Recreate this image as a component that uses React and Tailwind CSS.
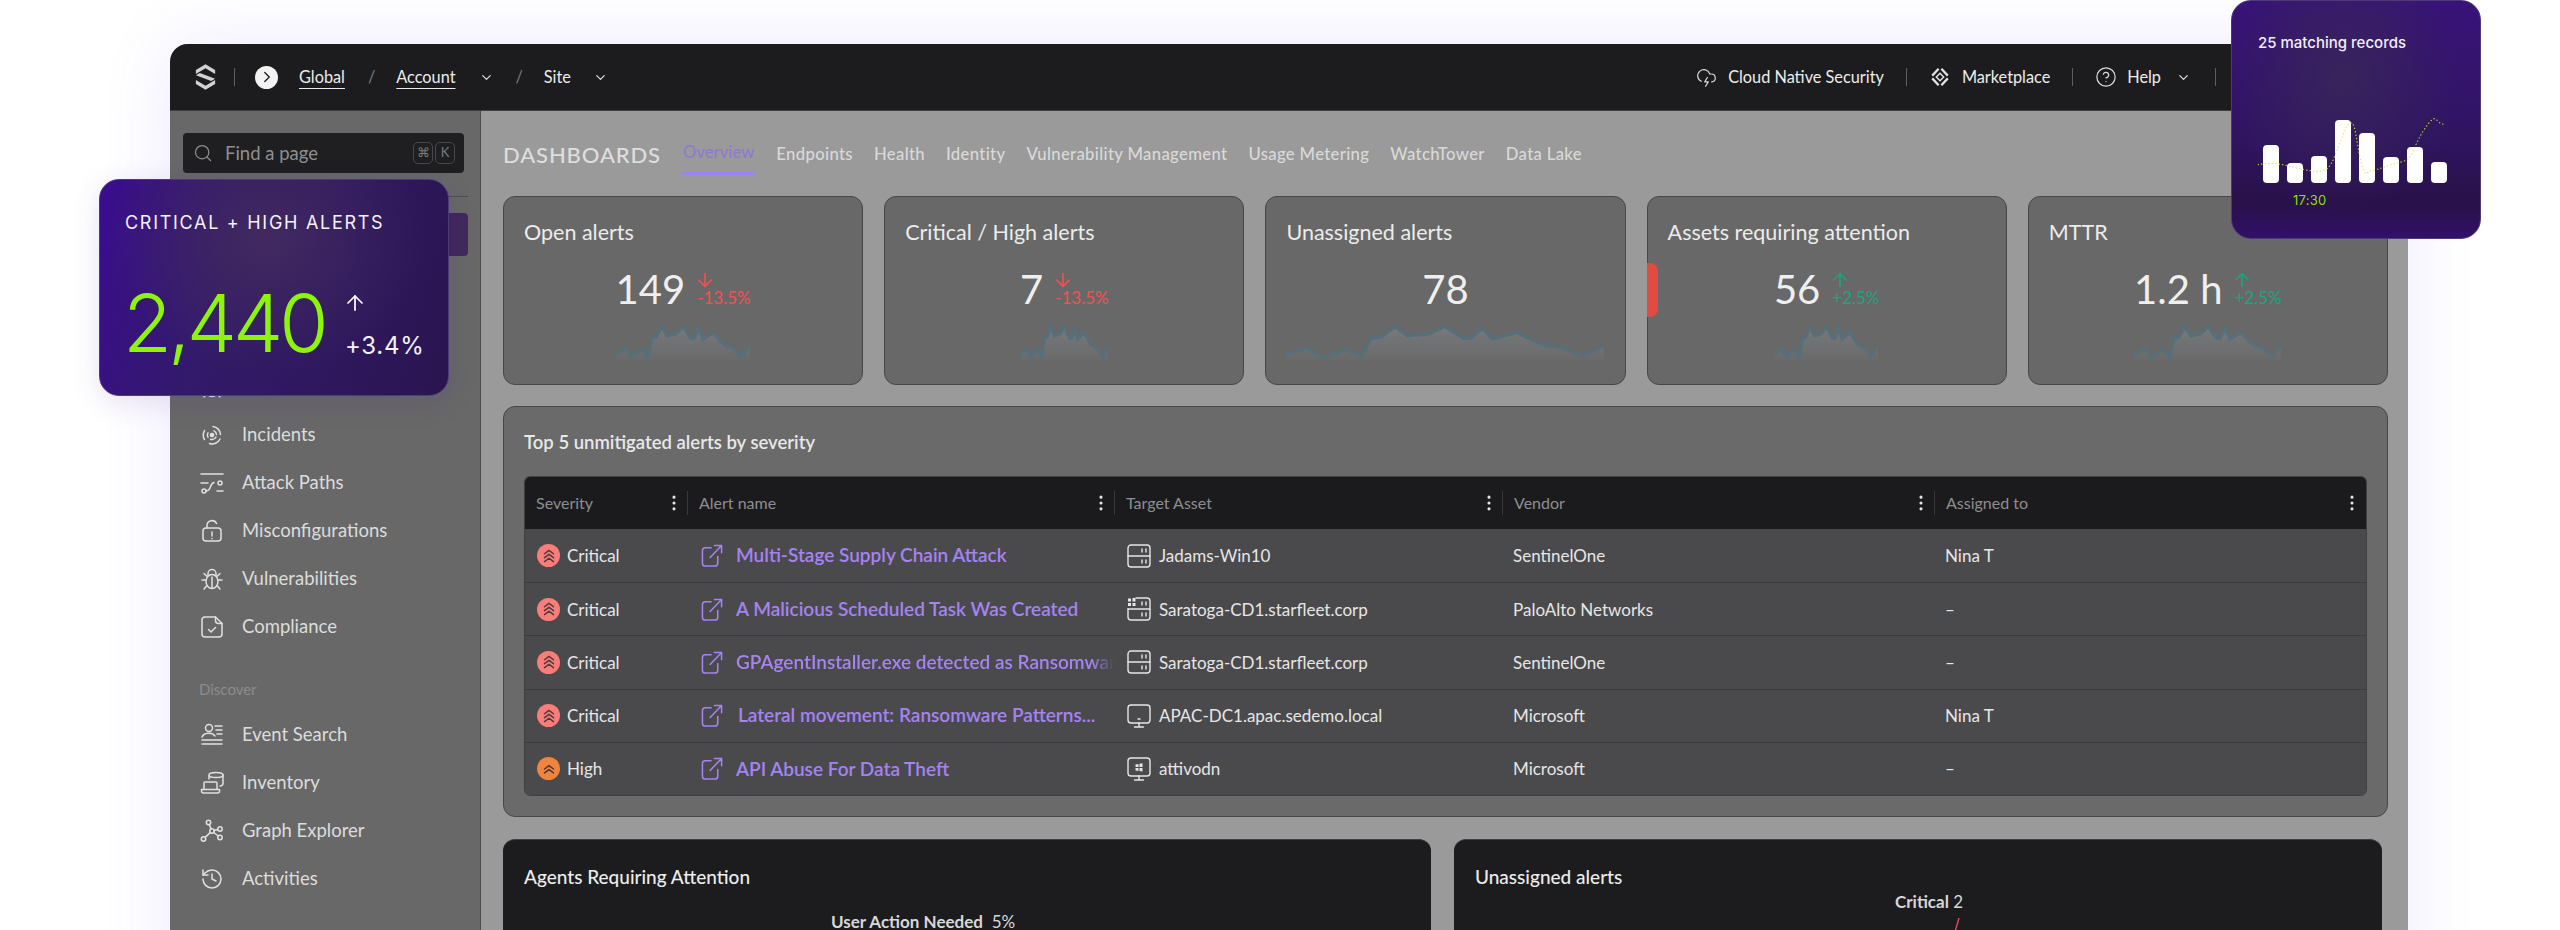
import React from "react";
import {
  ArrowDown,
  ArrowUp,
  ChevronDown,
  ChevronRight,
  CircleHelp,
  CloudLightning,
  EllipsisVertical,
  History,
  Search,
} from "lucide-react";

const Ico = ({ children, className = "w-6 h-6" }) => (
  <svg
    viewBox="0 0 24 24"
    fill="none"
    stroke="currentColor"
    strokeWidth="1.5"
    strokeLinecap="round"
    strokeLinejoin="round"
    className={className}
  >
    {children}
  </svg>
);

const sideIcons = {
  incidents: (
    <Ico>
      <circle cx="12" cy="12" r="1.6" fill="currentColor" />
      <path d="M4.5 7.5a9 9 0 0 0 0 9M8 9.8a4 4 0 0 0 0 4.4M13 3.5a8.5 8.5 0 0 1 7.5 8M14 7.8a4.5 4.5 0 0 1 2.5 3.7M9.5 20.5a8.5 8.5 0 0 0 10.5-4.5M10.5 16.2a4.5 4.5 0 0 0 5.5-2.2" />
    </Ico>
  ),
  paths: (
    <Ico>
      <path d="M1 3h22M1 12h7M17 20h6" />
      <circle cx="4" cy="20" r="2" />
      <circle cx="20" cy="12" r="2" />
      <path d="M6 20c6-.5 3-7 8-8.5" />
    </Ico>
  ),
  misconfig: (
    <Ico>
      <rect x="3" y="9" width="18" height="13" rx="3" />
      <path d="M7 9V6.5a5 5 0 0 1 9.5-2M12 13v4M12 19.6v.1" />
    </Ico>
  ),
  bug: (
    <Ico>
      <ellipse cx="12" cy="14.5" rx="6" ry="7" />
      <path d="M8 8.5V6.5a4 4 0 0 1 8 0v2M12 10v11M6 13H2M22 13h-4M6.5 9 4 6.5M17.5 9 20 6.5M6.5 19 4 22M17.5 19l2.5 3" />
    </Ico>
  ),
  compliance: (
    <Ico>
      <path d="M5 2h10.5L22 8.5V19a3 3 0 0 1-3 3H5a3 3 0 0 1-3-3V5a3 3 0 0 1 3-3z" />
      <path d="M15.5 2v3.5a3 3 0 0 0 3 3H22M8.5 14.5l2.5 2.5 4.5-4.5" />
    </Ico>
  ),
  events: (
    <Ico>
      <circle cx="9" cy="5" r="3.5" />
      <path d="M2 14a7 5 0 0 1 13-1M15 3h7M16 7h6M17 11h5M2 17h20M2 21h20" />
    </Ico>
  ),
  inventory: (
    <Ico>
      <path d="M4 18v-6a1 1 0 0 1 1-1h11a1 1 0 0 1 1 1v6M1.5 18.5h18V20a2 2 0 0 1-2 2h-14a2 2 0 0 1-2-2z" />
      <ellipse cx="16" cy="4" rx="7" ry="2.5" />
      <path d="M9 5v3M23 4v8a3 3 0 0 1-3 3" />
    </Ico>
  ),
  graph: (
    <Ico>
      <circle cx="8.5" cy="3.5" r="2.2" />
      <circle cx="20" cy="10" r="2.2" />
      <circle cx="20" cy="18.5" r="2.2" />
      <circle cx="3.5" cy="20" r="2.2" />
      <circle cx="12" cy="12" r="2.2" />
      <path d="m9.3 5.6 1.8 4.4M14.2 11.5l3.6-1M13.7 13.5l4.6 3.5M10.3 13.6l-5.2 4.8" />
    </Ico>
  ),
  history: <History className="w-6 h-6" strokeWidth={1.5} />,
};

const navTop = [
  ["Incidents", "incidents"],
  ["Attack Paths", "paths"],
  ["Misconfigurations", "misconfig"],
  ["Vulnerabilities", "bug"],
  ["Compliance", "compliance"],
];

const navBottom = [
  ["Event Search", "events"],
  ["Inventory", "inventory"],
  ["Graph Explorer", "graph"],
  ["Activities", "history"],
];

const tabs = [
  "Endpoints",
  "Health",
  "Identity",
  "Vulnerability Management",
  "Usage Metering",
  "WatchTower",
  "Data Lake",
];

const stats = [
  { title: "Open alerts", value: "149", delta: "-13.5%", dir: "down", spark: "w-[134px]" },
  { title: "Critical / High alerts", value: "7", delta: "-13.5%", dir: "down", spark: "w-[87px]" },
  { title: "Unassigned alerts", value: "78", spark: "w-[318px]" },
  { title: "Assets requiring attention", value: "56", delta: "+2.5%", dir: "up", spark: "w-[103px]", flag: true },
  { title: "MTTR", value: "1.2 h", delta: "+2.5%", dir: "up", spark: "w-[146px]" },
];

const rows = [
  { sev: "Critical", name: "Multi-Stage Supply Chain Attack", asset: "server", host: "Jadams-Win10", vendor: "SentinelOne", who: "Nina T" },
  { sev: "Critical", name: "A Malicious Scheduled Task Was Created", asset: "serverWin", host: "Saratoga-CD1.starfleet.corp", vendor: "PaloAlto Networks", who: "–" },
  { sev: "Critical", name: "GPAgentInstaller.exe detected as Ransomware", asset: "server", host: "Saratoga-CD1.starfleet.corp", vendor: "SentinelOne", who: "–", clipped: true },
  { sev: "Critical", name: "Lateral movement: Ransomware Patterns...", asset: "monitor", host: "APAC-DC1.apac.sedemo.local", vendor: "Microsoft", who: "Nina T", nudge: true },
  { sev: "High", name: "API Abuse For Data Theft", asset: "monitorWin", host: "attivodn", vendor: "Microsoft", who: "–" },
];

const Spark = ({ className }) => (
  <svg viewBox="45 195 400 105" preserveAspectRatio="none" className={`${className} h-[35px]`}>
    <defs>
      <linearGradient id="sparkFill" x1="0" y1="0" x2="0" y2="1">
        <stop offset="0" stopColor="#77797b" />
        <stop offset="1" stopColor="#6a6a6a" />
      </linearGradient>
    </defs>
    <path
      d="M45 283 72 265 90 295 120 268 140 290 152 235 165 232 182 200 198 228 225 222 245 200 268 235 278 235 292 205 305 238 335 218 368 255 395 265 418 290 445 258V300H45Z"
      fill="url(#sparkFill)"
    />
    <path
      d="M45 283 72 265 90 295 120 268 140 290 152 235 165 232 182 200 198 228 225 222 245 200 268 235 278 235 292 205 305 238 335 218 368 255 395 265 418 290 445 258"
      fill="none"
      stroke="#56707b"
      strokeWidth="3"
      vectorEffect="non-scaling-stroke"
    />
  </svg>
);

const StatCard = ({ title, value, delta, dir, spark, flag }) => (
  <div className="relative h-[189px] rounded-[12px] border border-[#474747] bg-[#686868] pt-[22px] flex flex-col">
    {flag && <div className="absolute -left-px top-[66px] h-[54px] w-[11px] rounded-r-[8px] bg-[#e04b42]" />}
    <p className="pl-5 text-[21.5px] leading-[26px] text-[#ececec]">{title}</p>
    <div className="mt-[19px] flex items-start justify-center gap-[12px] h-[50px]">
      <span className="text-[40px] leading-[50px] text-[#efefef]">{value}</span>
      {delta && (
        <span className={`flex flex-col items-start pt-[5px] text-[17px] leading-[17px] ${dir === "down" ? "text-[#f55050]" : "text-[#1fa37e]"}`}>
          {dir === "down" ? <ArrowDown className="w-[22px] h-[22px] -ml-[3px] -mb-[2px]" strokeWidth={1.75} /> : <ArrowUp className="w-[22px] h-[22px] -ml-[3px] -mb-[2px]" strokeWidth={1.75} />}
          {delta}
        </span>
      )}
    </div>
    <div className="mt-[11px] flex justify-center">
      <Spark className={spark} />
    </div>
  </div>
);

const SevIcon = ({ sev }) => (
  <span className={`w-[23px] h-[23px] rounded-full flex items-center justify-center shrink-0 ${sev === "High" ? "bg-[#f0843c]" : "bg-[#fb7d7a]"}`}>
    <svg viewBox="0 0 16 16" fill="none" stroke="#4a3a3c" strokeWidth="1.3" strokeLinecap="round" strokeLinejoin="round" className="w-[18px] h-[18px]">
      {sev === "High" ? (
        <path d="M4 8l4-3 4 3M4 11.5l4-3 4 3" />
      ) : (
        <path d="M4 6l4-3 4 3M4 9.5l4-3 4 3M4 13l4-3 4 3" />
      )}
    </svg>
  </span>
);

const LinkIcon = () => (
  <svg viewBox="0 0 22 24" fill="none" stroke="#a583f0" strokeWidth="1.6" strokeLinecap="round" strokeLinejoin="round" className="w-[22px] h-[23px] shrink-0">
    <path d="M10 4H4a3 3 0 0 0-3 3v13a3 3 0 0 0 3 3h10a3 3 0 0 0 3-3v-7" />
    <path d="M9 14 21 1.5M13.5 1.5H21V9" />
  </svg>
);

const AssetIcon = ({ kind }) => (
  <svg viewBox="0 0 24 24" fill="none" stroke="#e6e6e6" strokeWidth="1.4" strokeLinecap="round" strokeLinejoin="round" className="w-6 h-6 shrink-0">
    {(kind === "server" || kind === "serverWin") && (
      <>
        <path d={kind === "server" ? "M4 1h16a3 3 0 0 1 3 3v16a3 3 0 0 1-3 3H4a3 3 0 0 1-3-3V4a3 3 0 0 1 3-3z" : "M9 1h11a3 3 0 0 1 3 3v16a3 3 0 0 1-3 3H4a3 3 0 0 1-3-3v-8"} />
        <path d="M1 12h22M15 5v3M19 5v3M15 16v3M19 16v3" />
      </>
    )}
    {kind === "serverWin" && (
      <path d="M1 1.5h3v3H1zM5.5 1h3v3.5h-3zM1 6h3v3H1zM5.5 6h3v3h-3z" fill="#e6e6e6" stroke="none" />
    )}
    {(kind === "monitor" || kind === "monitorWin") && (
      <>
        <rect x="1" y="1" width="22" height="18" rx="3" />
        <path d="M12 19v4M7.5 23h9" />
      </>
    )}
    {kind === "monitor" && <path d="M11 15h2" />}
    {kind === "monitorWin" && (
      <path d="M8.5 7.5l3-.6v3h-3zM12.5 6.8l3-.6v3.7h-3zM8.5 10.9h3v3l-3-.5zM12.5 10.9h3v3.7l-3-.5z" fill="#e6e6e6" stroke="none" />
    )}
  </svg>
);

const HeadCell = ({ label, first, last }) => (
  <div className={`relative flex items-center h-full text-[16px] text-[#8e8e90] ${first ? "pl-[11px]" : "pl-[12px]"}`}>
    {!first && <span className="absolute left-0 top-[14px] h-[24px] w-px bg-[#38383a]" />}
    {label}
    <EllipsisVertical className={`absolute top-[16px] w-[20px] h-[20px] text-[#e4e4e4] ${last ? "right-[4px]" : "right-[3px]"}`} strokeWidth={1.75} />
  </div>
);

const NavItem = ({ label, icon }) => (
  <div className="h-[48px] flex items-center gap-[18px] pl-[17px] text-[18.5px] text-[#dcdcdc]">
    <span className="text-[#e0e0e0]">{sideIcons[icon]}</span>
    {label}
  </div>
);

const TopSep = () => <span className="block w-px h-[18px] bg-[#5e5e60]" />;

const bars = [38, 20, 27, 63, 50, 26, 36, 21];

export default function App() {
  return (
    <div className="relative w-[2560px] h-[930px] overflow-hidden bg-white font-['Lato',sans-serif]">
      <div className="absolute left-[170px] top-[44px] w-[2238px] h-[1000px] rounded-t-[18px] shadow-[0_0_70px_rgba(110,70,255,0.12)]" />
      <div className="relative ml-[170px] pt-[44px] w-[2238px] h-[930px]">
        <div className="h-full rounded-t-[18px] overflow-hidden flex flex-col bg-[#9a9a9a]">
          <header className="h-[67px] shrink-0 bg-[#1c1c1e] border-b border-[#3e3e40] flex items-center text-[16.3px] text-[#ececec]">
            <svg viewBox="0 0 24 29" fill="#d2d2d2" className="ml-[25px] w-[21px] h-[26px]">
              <path d="M12 0l11 6.5V11L12 4.5 1 11V6.5z" />
              <path d="M1 12.5l4.5-2.7L23 16.5l-4.5 2.7z" />
              <path d="M12 29 1 22.5V18l11 6.5L23 18v4.5z" />
            </svg>
            <span className="ml-[18px]"><TopSep /></span>
            <span className="ml-[20px] w-[23px] h-[23px] rounded-full bg-[#f2f2f2] flex items-center justify-center">
              <ChevronRight className="w-[18px] h-[18px] text-[#1c1c1e]" strokeWidth={1.75} />
            </span>
            <span className="ml-[21px] underline underline-offset-[5px]">Global</span>
            <span className="ml-[23px] text-[#7b7b7d]">/</span>
            <span className="ml-[21px] underline underline-offset-[5px]">Account</span>
            <ChevronDown className="ml-[23px] w-[15px] h-[15px] text-[#dcdcdc]" />
            <span className="ml-[22px] text-[#7b7b7d]">/</span>
            <span className="ml-[21px]">Site</span>
            <ChevronDown className="ml-[22px] w-[15px] h-[15px] text-[#dcdcdc]" />
            <div className="ml-auto mr-[192px] flex items-center">
              <CloudLightning className="w-[21px] h-[21px] text-[#d8d8d8]" strokeWidth={1.4} />
              <span className="ml-[11px]">Cloud Native Security</span>
              <span className="ml-[22px] mr-[22px]"><TopSep /></span>
              <svg viewBox="0 0 24 24" fill="none" stroke="#e4e4e4" strokeWidth="2.4" className="w-[22px] h-[22px]">
                <path d="M10.5 3 3.5 10.5M13.5 3l7 7.5M3.5 13.5l7 7.5M20.5 13.5l-7 7.5" />
                <path d="M12 8l4 4-4 4-4-4z" strokeWidth="1.6" />
              </svg>
              <span className="ml-[11px]">Marketplace</span>
              <span className="ml-[22px] mr-[22px]"><TopSep /></span>
              <CircleHelp className="w-[22px] h-[22px] text-[#dcdcdc]" strokeWidth={1.3} />
              <span className="ml-[10px]">Help</span>
              <ChevronDown className="ml-[15px] w-[15px] h-[15px] text-[#dcdcdc]" />
              <span className="ml-[24px]"><TopSep /></span>
            </div>
          </header>

          <div className="flex flex-1 min-h-0">
            <aside className="w-[311px] shrink-0 bg-[#686868] border-r border-[#4c4c4c] pt-[22px] px-[13px]">
              <div className="h-[40px] w-[281px] rounded-[4px] bg-[#1f1f21] flex items-center pl-[10px] pr-[9px] text-[18.5px] text-[#8f8f91]">
                <Search className="w-[20px] h-[20px] text-[#8f8f91]" strokeWidth={1.5} />
                <span className="ml-[12px] pt-[2px]">Find a page</span>
                <span className="ml-auto flex gap-[2px] text-[13px] text-[#79797b]">
                  <span className="w-[20px] h-[22px] rounded-[5px] border border-[#48484a] flex items-center justify-center">⌘</span>
                  <span className="w-[20px] h-[22px] rounded-[5px] border border-[#48484a] flex items-center justify-center">K</span>
                </span>
              </div>
              <div className="mt-[23px] h-px w-[285px] bg-[#4e4e4e]" />
              <div className="mt-[16px] h-[43px] w-[285px] rounded-[4px] bg-[#40295c]" />
              <div className="h-[106.5px]" />
              <div className="h-[48px] flex items-center pl-[17px] text-[#dcdcdc]">{sideIcons.bug}</div>
              {navTop.map(([label, icon]) => (
                <NavItem key={label} label={label} icon={icon} />
              ))}
              <p className="mt-[28px] mb-[12px] pl-[16px] text-[15px] leading-[20px] text-[#8c8c8c]">Discover</p>
              {navBottom.map(([label, icon]) => (
                <NavItem key={label} label={label} icon={icon} />
              ))}
            </aside>

            <main className="flex-1 min-w-0 pl-[22px] pr-[20px]">
              <div className="h-[63px] flex items-end">
                <div className="flex items-center h-[41px] mb-[-1px]">
                  <h1 className="text-[22px] font-medium tracking-[0.04em] text-[#dedede]">DASHBOARDS</h1>
                  <div className="ml-[21px] h-full flex items-center text-[16.7px] font-medium text-[#8f7bd0] border-b-[3px] border-[#9d82f5] px-[1px]">Overview</div>
                  <div className="flex ml-[21px] gap-[21px] text-[16.7px] font-medium tracking-[0.02em] text-[#d9d9d9]">
                    {tabs.map((t) => (
                      <span key={t}>{t}</span>
                    ))}
                  </div>
                </div>
              </div>

              <div className="mt-[22px] grid grid-cols-5 gap-[21px]">
                {stats.map((s) => (
                  <StatCard key={s.title} {...s} />
                ))}
              </div>

              <section className="mt-[21px] h-[411px] rounded-[12px] border border-[#474747] bg-[#6a6a6a] px-[20px] pt-[22px]">
                <h2 className="text-[18.5px] leading-[26px] font-semibold text-[#e8e8e8]">Top 5 unmitigated alerts by severity</h2>
                <div className="mt-[21px] rounded-[6px] overflow-hidden border border-[#404040]">
                  <div className="h-[52px] bg-[#1b1b1d] grid grid-cols-[162px_427px_388px_432px_1fr]">
                    <HeadCell label="Severity" first />
                    <HeadCell label="Alert name" />
                    <HeadCell label="Target Asset" />
                    <HeadCell label="Vendor" />
                    <HeadCell label="Assigned to" last />
                  </div>
                  {rows.map((r, i) => (
                    <div
                      key={i}
                      className={`h-[53.2px] bg-[#4a4a4c] grid grid-cols-[162px_427px_388px_432px_1fr] items-center text-[17px] text-[#e6e6e6] ${i > 0 ? "border-t border-[#3d3d3f]" : ""}`}
                    >
                      <div className="flex items-center gap-[7px] pl-[12px]">
                        <SevIcon sev={r.sev} />
                        {r.sev}
                      </div>
                      <div className="flex items-center gap-[13px] pl-[14px] min-w-0">
                        <LinkIcon />
                        <span
                          className={`text-[19px] font-semibold text-[#a583f0] whitespace-nowrap ${r.nudge ? "ml-[2px]" : ""} ${r.clipped ? "w-[394px] overflow-hidden [mask-image:linear-gradient(90deg,#000_94%,transparent)]" : ""}`}
                        >
                          {r.name}
                        </span>
                      </div>
                      <div className="relative flex items-center gap-[8px] pl-[13px]">
                        <AssetIcon kind={r.asset} />
                        {r.host}
                      </div>
                      <div className="pl-[11px]">{r.vendor}</div>
                      <div className="pl-[11px]">{r.who}</div>
                    </div>
                  ))}
                </div>
              </section>

              <div className="mt-[22px] grid grid-cols-[928px_928px] gap-[23px]">
                <div className="h-[200px] rounded-t-[12px] bg-[#1c1c1e] border-t border-[#3e3e40] pt-[24px] pl-[21px] relative">
                  <p className="text-[19px] leading-[26px] font-medium text-[#ececec]">Agents Requiring Attention</p>
                  <p className="mt-[20px] ml-[307px] text-[17px] leading-[24px] text-[#d8d8d8]"><span className="font-bold">User Action Needed</span>&nbsp; 5%</p>
                </div>
                <div className="h-[200px] rounded-t-[12px] bg-[#1c1c1e] border-t border-[#3e3e40] pt-[24px] pl-[21px] relative">
                  <p className="text-[19px] leading-[26px] font-medium text-[#ececec]">Unassigned alerts</p>
                  <p className="ml-[420px] text-[17px] leading-[24px] text-[#d8d8d8]"><span className="font-bold">Critical</span> 2</p>
                  <svg viewBox="0 0 6 14" className="absolute left-[500px] top-[78px] w-[6px] h-[14px]">
                    <path d="M5 0 1 14" stroke="#e0474c" strokeWidth="1.5" />
                  </svg>
                </div>
              </div>
            </main>
          </div>
        </div>
      </div>

      <div className="absolute left-[99px] top-[179px] w-[350px] h-[217px] rounded-[20px] border border-[#4f3a78] shadow-[0_6px_30px_rgba(60,20,140,0.12)] bg-[radial-gradient(ellipse_at_48%_28%,#41295f_0%,rgba(64,40,94,0)_62%),linear-gradient(105deg,#3a0d8e_0%,#331a6b_35%,#2a1550_100%)] font-['Inter',sans-serif]">
        <p className="absolute left-[25px] top-[32px] text-[18px] leading-[22px] tracking-[0.095em] text-[#f4f2fa]">CRITICAL + HIGH ALERTS</p>
        <p className="absolute left-[23px] top-[93px] text-[80px] leading-[100px] font-light tracking-[-0.05em] text-[#8cf50a]">2,440</p>
        <ArrowUp className="absolute left-[243px] top-[111px] w-[24px] h-[24px] text-white" strokeWidth={1.75} />
        <p className="absolute left-[245px] top-[151px] text-[24px] leading-[30px] tracking-[0.03em] text-[#f4f2fa]">+3.4%</p>
      </div>

      <div className="absolute left-[2231px] top-0 w-[250px] h-[239px] rounded-[20px] border border-[#4f3a78] bg-[radial-gradient(ellipse_at_45%_32%,#38245a_0%,rgba(56,36,90,0)_60%),linear-gradient(180deg,#381379_0%,#2f1460_60%,#281148_85%,#321069_100%)] font-['Inter',sans-serif]">
        <p className="absolute left-[26px] top-[32px] text-[15px] leading-[20px] font-medium text-[#f1eef8]">25 matching records</p>
        <div className="absolute left-[31px] top-[118px] h-[64px] flex items-end gap-[8px]">
          {bars.map((h, i) => (
            <div key={i} className="w-[16px] rounded-[4px] bg-white" style={{ height: h }} />
          ))}
        </div>
        <svg viewBox="33 0 750 717" className="absolute inset-0 w-[250px] h-[239px]">
          <path
            d="M112 491C130 487 150 485 180 490S270 515 300 510 335 480 355 430 380 362 392 366 405 420 420 480 435 510 455 508 500 492 540 483 570 445 610 385 640 368 670 370 705 385"
            fill="none"
            stroke="#c6f52a"
            strokeWidth="4"
            strokeLinecap="round"
            strokeDasharray="0.5 10"
            opacity="0.85"
          />
        </svg>
        <p className="absolute left-[61px] top-[189px] text-[13px] leading-[20px] tracking-[0.02em] text-[#8ddf12]">17:30</p>
      </div>
    </div>
  );
}
